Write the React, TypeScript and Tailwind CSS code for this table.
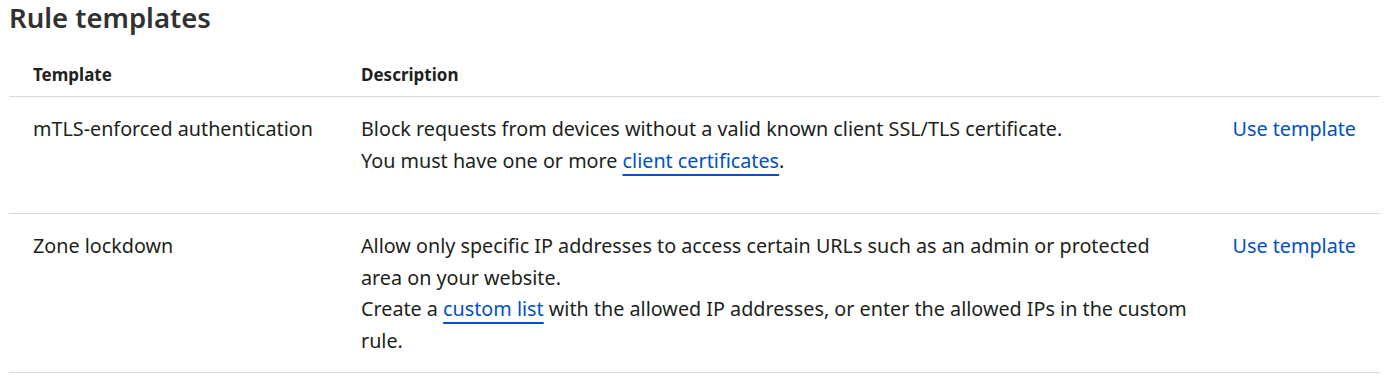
import React from "react"

const font = { fontFamily: '"Noto Sans", "Open Sans", sans-serif' }

function Link({ children }: { children: React.ReactNode }) {
    return (
        <a href="#" className="text-[#0051c3] underline decoration-[#0051c3] decoration-2 underline-offset-[6px]">
            {children}
        </a>
    )
}

const rows = [
    {
        name: "mTLS-enforced authentication",
        lines: [
            <>Block requests from devices without a valid known client SSL/TLS certificate.</>,
            <>
                You must have one or more <Link>client certificates</Link>.
            </>,
        ],
        extra: true,
    },
    {
        name: "Zone lockdown",
        lines: [
            <>Allow only specific IP addresses to access certain URLs such as an admin or protected</>,
            <>area on your website.</>,
            <>
                Create a <Link>custom list</Link> with the allowed IP addresses, or enter the allowed IPs in the custom
            </>,
            <>rule.</>,
        ],
        extra: false,
    },
]

export default function App() {
    return (
        <div className="bg-white w-[1392px] h-[386px] overflow-hidden px-[9px] text-[#1d1f20]" style={font}>
            <h2 className="text-[27.5px] leading-[36px] font-semibold text-[#313131] pt-0">Rule templates</h2>

            <div className="mt-[27px] w-[1371px]">
                <div className="grid grid-cols-[328px_873px_1fr] border-b border-[#d9d9d9] pb-[9px]">
                    <div className="pl-6 text-[17px] font-bold leading-6">Template</div>
                    <div className="pl-6 text-[17px] font-bold leading-6">Description</div>
                    <div />
                </div>

                {rows.map((row) => (
                    <div
                        key={row.name}
                        className={`grid grid-cols-[328px_873px_1fr] border-b border-[#d9d9d9] pt-4 ${row.extra ? "pb-[37px]" : "pb-4"}`}
                    >
                        <div className="pl-6 text-[19.75px] leading-[31.5px]">{row.name}</div>
                        <div className="pl-6 text-[19.75px] leading-[31.5px]">
                            {row.lines.map((l, i) => (
                                <div key={i} className="whitespace-nowrap">
                                    {l}
                                </div>
                            ))}
                        </div>
                        <div className="pr-6 text-right text-[19.75px] leading-[31.5px]">
                            <a href="#" className="text-[#0051c3]">
                                Use template
                            </a>
                        </div>
                    </div>
                ))}
            </div>
        </div>
    )
}
